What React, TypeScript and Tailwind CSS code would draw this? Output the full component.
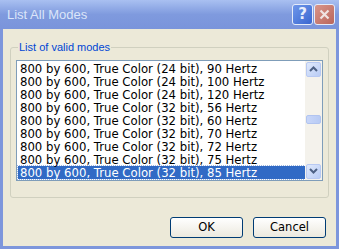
const MODES = [
  "800 by 600, True Color (24 bit), 90 Hertz",
  "800 by 600, True Color (24 bit), 100 Hertz",
  "800 by 600, True Color (24 bit), 120 Hertz",
  "800 by 600, True Color (32 bit), 56 Hertz",
  "800 by 600, True Color (32 bit), 60 Hertz",
  "800 by 600, True Color (32 bit), 70 Hertz",
  "800 by 600, True Color (32 bit), 72 Hertz",
  "800 by 600, True Color (32 bit), 75 Hertz",
  "800 by 600, True Color (32 bit), 85 Hertz",
];

const SELECTED = 8;

function Arrow({ up }: { up: boolean }) {
  return (
    <svg width="9" height="6" viewBox="0 0 9 6" aria-hidden="true">
      <path
        d={up ? "M1 5 L4.5 1.5 L8 5" : "M1 1 L4.5 4.5 L8 1"}
        fill="none"
        stroke="#4d6185"
        strokeWidth="2"
      />
    </svg>
  );
}

function ScrollButton({ up }: { up: boolean }) {
  return (
    <div className="grid h-[15px] w-[15px] place-items-center rounded-[2px] border border-[#b8c9f2] bg-gradient-to-br from-[#e0e9fb] to-[#b9ccf5]">
      <Arrow up={up} />
    </div>
  );
}

function TitleButton({ kind }: { kind: "help" | "close" }) {
  const bg =
    kind === "help"
      ? "bg-gradient-to-br from-[#6f97ea] to-[#3a66d0]"
      : "bg-gradient-to-br from-[#d9958a] to-[#b9665c]";
  return (
    <div
      className={`grid h-[21px] w-[21px] place-items-center rounded-[3px] border border-[#e4ebf9] ${bg}`}
    >
      {kind === "help" ? (
        <span className="font-['DejaVu_Sans',sans-serif] text-[15px] font-bold leading-none text-[#e8eefc]">?</span>
      ) : (
        <svg width="11" height="11" viewBox="0 0 11 11" aria-hidden="true">
          <path d="M1.5 1.5 L9.5 9.5 M9.5 1.5 L1.5 9.5" stroke="#f0e4e2" strokeWidth="2.2" />
        </svg>
      )}
    </div>
  );
}

function XpButton({ label }: { label: string }) {
  return (
    <button
      type="button"
      className="h-[21px] w-[73px] rounded-[3px] border border-[#003c74] bg-gradient-to-b from-[#ffffff] to-[#ece9de] font-['DejaVu_Sans',sans-serif] text-[11.5px] text-black"
    >
      {label}
    </button>
  );
}

export default function App() {
  return (
    <div className="h-[249px] w-[339px] overflow-hidden font-['DejaVu_Sans',sans-serif]">
      <div className="flex h-[249px] w-[339px] flex-col bg-[#7d96dc] px-[3px] pb-[3px]">
        <div className="-mx-[3px] flex h-[29px] items-center justify-between bg-gradient-to-b from-[#a9c0f1] via-[#7f9ade] to-[#7a94db] pl-[7px] pr-[4px]">
          <span className="font-['Liberation_Sans',sans-serif] text-[13px] text-[#dbe5f9]">List All Modes</span>
          <div className="flex gap-[1px]">
            <TitleButton kind="help" />
            <TitleButton kind="close" />
          </div>
        </div>
        <div className="flex flex-1 flex-col bg-[#ece9d8] px-[7px]">
          <fieldset className="mt-[10px] h-[159px] rounded-[3px] border border-[#d0d0bf] px-[5px] pb-[14px]">
            <legend className="ml-[2px] px-[1px] font-['Liberation_Sans',sans-serif] text-[11px] text-[#0046d5]">
              List of valid modes
            </legend>
            <div className="mt-[4px] flex h-[121px] border border-[#7f9db9] bg-white">
              <ul className="flex-1 pl-[1px] pt-[1px] text-[11.7px] leading-[13px] text-black">
                {MODES.map((m, i) => (
                  <li
                    key={m}
                    className={
                      i === SELECTED
                        ? "h-[13px] whitespace-nowrap bg-[#316ac5] pl-[2px] pt-[1px] text-white outline outline-1 outline-dotted outline-[#9fb8e2]"
                        : "h-[13px] whitespace-nowrap pl-[2px] pt-[1px]"
                    }
                  >
                    {m}
                  </li>
                ))}
              </ul>
              <div className="flex w-[17px] flex-col bg-[#f4f2ec] p-[1px]">
                <ScrollButton up />
                <div className="relative flex-1">
                  <div className="absolute left-0 top-[38px] h-[9px] w-[15px] rounded-[2px] border border-[#b1c4f0] bg-gradient-to-r from-[#c8d6f9] to-[#b8cbf4]" />
                </div>
                <ScrollButton up={false} />
              </div>
            </div>
          </fieldset>
          <div className="mt-[19px] flex justify-end gap-[10px] pr-[3px]">
            <XpButton label="OK" />
            <XpButton label="Cancel" />
          </div>
        </div>
      </div>
    </div>
  );
}
